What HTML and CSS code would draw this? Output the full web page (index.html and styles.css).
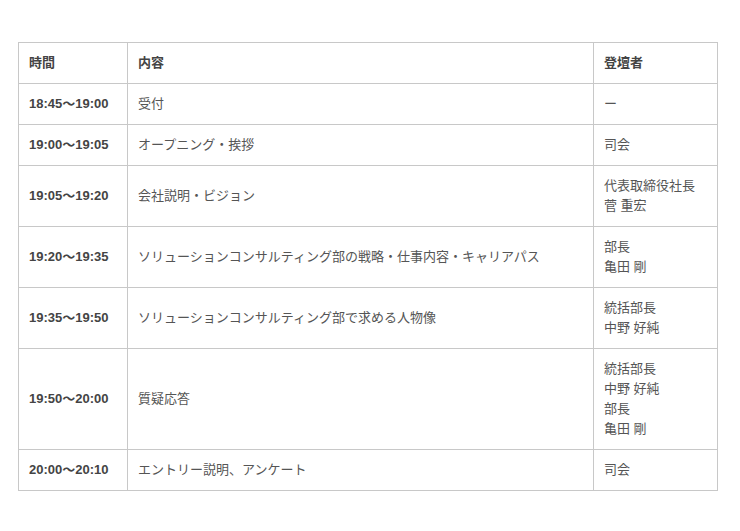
FILE: index.html
```html
<!DOCTYPE html>
<html lang="ja">
<head>
<meta charset="utf-8">
<link rel="stylesheet" href="styles.css">
</head>
<body>
<div class="wrap">
<table class="schedule">
  <colgroup>
    <col class="c-time">
    <col class="c-content">
    <col class="c-speaker">
  </colgroup>
  <thead>
    <tr><th>時間</th><th>内容</th><th>登壇者</th></tr>
  </thead>
  <tbody>
    <tr><td class="time">18:45〜19:00</td><td>受付</td><td>ー</td></tr>
    <tr><td class="time">19:00〜19:05</td><td>オープニング・挨拶</td><td>司会</td></tr>
    <tr><td class="time">19:05〜19:20</td><td>会社説明・ビジョン</td><td>代表取締役社長<br>菅 重宏</td></tr>
    <tr><td class="time">19:20〜19:35</td><td>ソリューションコンサルティング部の戦略・仕事内容・キャリアパス</td><td>部長<br>亀田 剛</td></tr>
    <tr><td class="time">19:35〜19:50</td><td>ソリューションコンサルティング部で求める人物像</td><td>統括部長<br>中野 好純</td></tr>
    <tr><td class="time">19:50〜20:00</td><td>質疑応答</td><td>統括部長<br>中野 好純<br>部長<br>亀田 剛</td></tr>
    <tr><td class="time">20:00〜20:10</td><td>エントリー説明、アンケート</td><td>司会</td></tr>
  </tbody>
</table>
</div>
</body>
</html>
```
FILE: styles.css
```css
html, body {
  margin: 0;
  padding: 0;
  background: #fff;
}
body {
  font-family: "Liberation Sans", "Noto Sans CJK JP", sans-serif;
  font-size: 13px;
  color: #555;
}
.wrap {
  padding: 42px 22px 0 18px;
}
.schedule {
  width: 700px;
  border-collapse: collapse;
  table-layout: fixed;
}
.c-time { width: 109px; }
.c-speaker { width: 124px; }
.schedule th,
.schedule td {
  border: 1px solid #c8c8c8;
  padding: 10px 10px;
  line-height: 20px;
  text-align: left;
  vertical-align: middle;
  font-weight: normal;
}
.schedule th {
  font-weight: bold;
  color: #444;
}
.schedule td.time {
  font-weight: bold;
  color: #444;
}
```
